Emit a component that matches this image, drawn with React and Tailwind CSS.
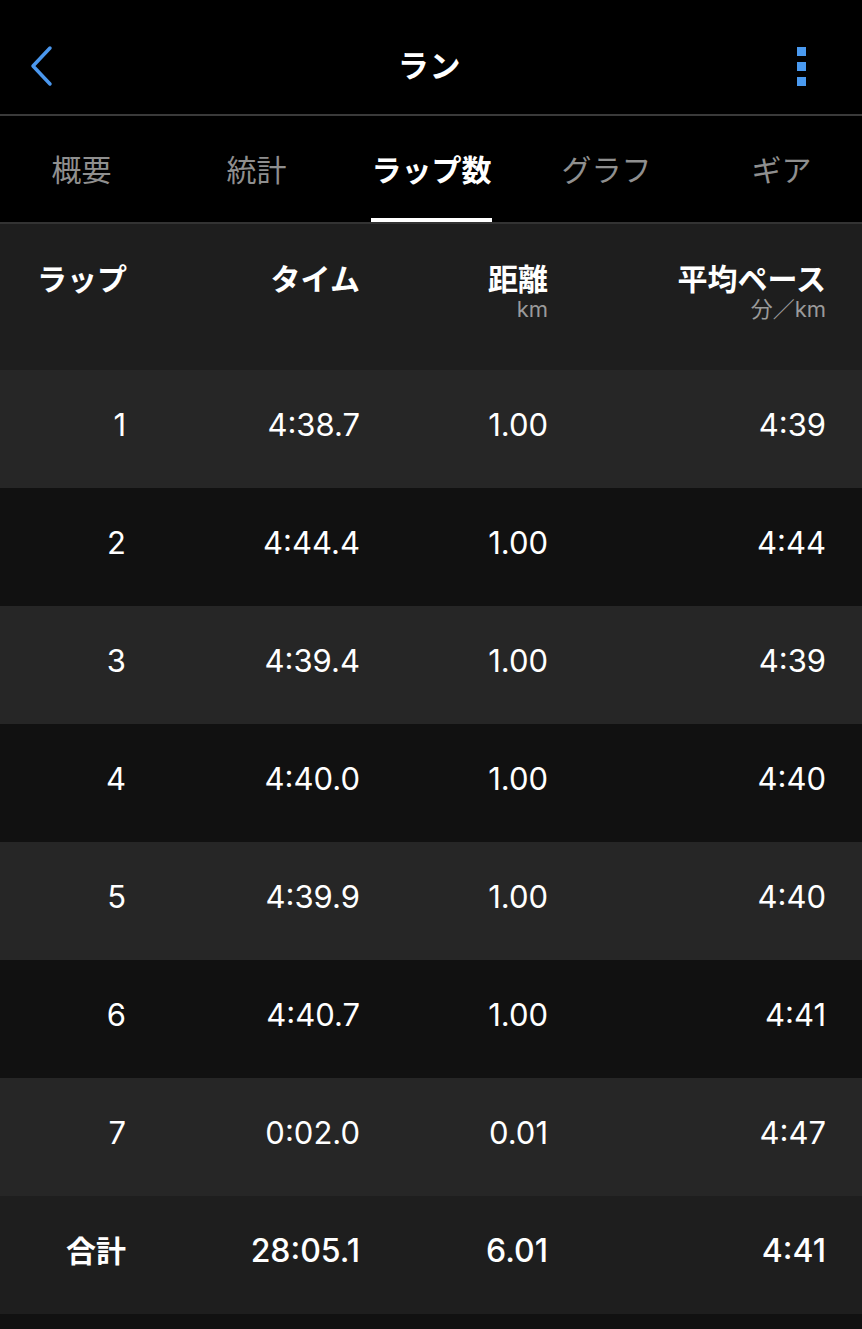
import React from "react";

const laps = [
  ["1", "4:38.7", "1.00", "4:39"],
  ["2", "4:44.4", "1.00", "4:44"],
  ["3", "4:39.4", "1.00", "4:39"],
  ["4", "4:40.0", "1.00", "4:40"],
  ["5", "4:39.9", "1.00", "4:40"],
  ["6", "4:40.7", "1.00", "4:41"],
  ["7", "0:02.0", "0.01", "4:47"],
];

const font = { fontFamily: 'Inter, "Noto Sans CJK JP", sans-serif' };

export default function App() {
  return (
    <div className="w-[862px] min-h-[1329px] bg-[#111111] text-white overflow-hidden" style={font}>
      {/* Top bar */}
      <div className="h-[114px] bg-black flex items-center justify-between px-[28px] pt-[18px]">
        <svg width="26" height="42" viewBox="0 0 26 42">
          <path d="M22 3 L5 21 L22 39" fill="none" stroke="#4a97ee" strokeWidth="3.5" strokeLinecap="round" strokeLinejoin="round" />
        </svg>
        <div className="text-[31px] font-bold tracking-wide ml-[8px]">ラン</div>
        <div className="flex flex-col gap-[6px] mr-[28px]">
          <span className="block w-[9px] h-[9px] bg-[#4a9af0]"></span>
          <span className="block w-[9px] h-[9px] bg-[#4a9af0]"></span>
          <span className="block w-[9px] h-[9px] bg-[#4a9af0]"></span>
        </div>
      </div>
      <div className="h-[2px] bg-[#3a3a3a]"></div>
      {/* Tabs */}
      <div className="h-[106px] bg-black flex ml-[-6px]">
        {["概要", "統計", "ラップ数", "グラフ", "ギア"].map((t, i) => (
          <div key={t} className="w-[175px] shrink-0 flex flex-col items-center justify-end">
            <div className={`text-[30px] leading-none mb-[33px] ${i === 2 ? "text-white font-bold" : "text-[#8f8f8f]"}`}>{t}</div>
            <div className={`h-[4px] w-[121px] ${i === 2 ? "bg-white" : "bg-transparent"}`}></div>
          </div>
        ))}
      </div>
      <div className="h-[2px] bg-[#333333]"></div>
      {/* Table header */}
      <div className="h-[146px] bg-[#1e1e1e] grid grid-cols-[126px_234px_188px_278px] pt-[38px]">
        <div className="pl-[37px] text-[30px] font-bold leading-[34px] whitespace-nowrap">ラップ</div>
        <div className="text-right text-[30px] font-bold leading-[34px]">タイム</div>
        <div className="text-right">
          <div className="text-[30px] font-bold leading-[34px]">距離</div>
          <div className="text-[22px] text-[#9a9a9a] leading-[26px]">km</div>
        </div>
        <div className="text-right">
          <div className="text-[30px] font-bold leading-[34px] whitespace-nowrap">平均ペース</div>
          <div className="text-[22px] text-[#9a9a9a] leading-[26px]">分／km</div>
        </div>
      </div>
      {/* Rows */}
      {laps.map((r, i) => (
        <div
          key={r[0]}
          className={`h-[118px] grid grid-cols-[126px_234px_188px_278px] items-center text-[31px] font-normal pb-[8px] ${i % 2 === 0 ? "bg-[#262626]" : "bg-[#111111]"}`}
        >
          <div className="text-right">{r[0]}</div>
          <div className="text-right">{r[1]}</div>
          <div className="text-right">{r[2]}</div>
          <div className="text-right">{r[3]}</div>
        </div>
      ))}
      {/* Total */}
      <div className="h-[118px] bg-[#1e1e1e] grid grid-cols-[126px_234px_188px_278px] items-center text-[32px] font-medium pb-[8px]">
        <div className="text-right text-[30px] font-bold">合計</div>
        <div className="text-right">28:05.1</div>
        <div className="text-right">6.01</div>
        <div className="text-right">4:41</div>
      </div>
      <div className="h-[15px] bg-[#111111]"></div>
    </div>
  );
}
